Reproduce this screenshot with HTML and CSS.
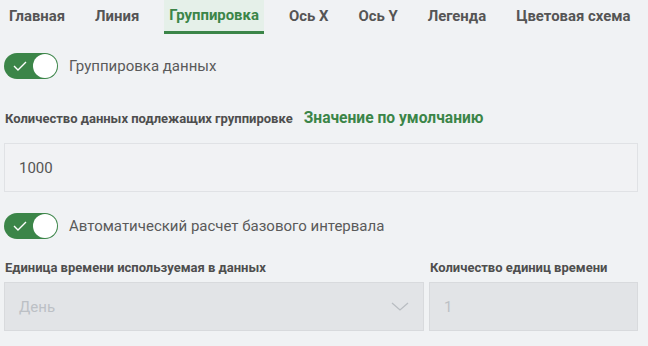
FILE: index.html
```html
<!DOCTYPE html>
<html lang="ru">
<head>
<meta charset="utf-8">
<link rel="stylesheet" href="styles.css">
</head>
<body>
<div class="page">
  <nav class="tabs">
    <div class="tab">Главная</div>
    <div class="tab">Линия</div>
    <div class="tab active">Группировка</div>
    <div class="tab">Ось X</div>
    <div class="tab">Ось Y</div>
    <div class="tab">Легенда</div>
    <div class="tab">Цветовая схема</div>
  </nav>

  <div class="switch-row row1">
    <span class="switch"><svg class="check" width="14" height="10" viewBox="0 0 14 10"><path d="M1 5 L5 9 L13 1" fill="none" stroke="#fff" stroke-width="1.4"/></svg><span class="knob"></span></span>
    <span class="switch-label">Группировка данных</span>
  </div>

  <div class="label-row">
    <span class="label">Количество данных подлежащих группировке</span>
    <span class="link">Значение по умолчанию</span>
  </div>
  <div class="input main">1000</div>

  <div class="switch-row row2">
    <span class="switch"><svg class="check" width="14" height="10" viewBox="0 0 14 10"><path d="M1 5 L5 9 L13 1" fill="none" stroke="#fff" stroke-width="1.4"/></svg><span class="knob"></span></span>
    <span class="switch-label">Автоматический расчет базового интервала</span>
  </div>

  <div class="grid">
    <div class="field">
      <div class="label">Единица времени используемая в данных</div>
      <div class="input disabled select">День
        <svg class="chev" width="18" height="10" viewBox="0 0 18 10"><path d="M1 1 L9 8 L17 1" fill="none" stroke="#b9bdc2" stroke-width="1.3"/></svg>
      </div>
    </div>
    <div class="field">
      <div class="label">Количество единиц времени</div>
      <div class="input disabled">1</div>
    </div>
  </div>
</div>
</body>
</html>
```
FILE: styles.css
```css
html, body {
  margin: 0;
  padding: 0;
  background: #f0f2f4;
}
body {
  font-family: Roboto, "Noto Sans", sans-serif;
  color: #5a5a5a;
}
.page {
  padding: 0 10px 0 4px;
}
.tabs {
  display: flex;
  gap: 20px;
  height: 34px;
}
.tab {
  padding: 0 5px;
  font-weight: 700;
  font-size: 14.9px;
  line-height: 32px;
  color: #555;
  border-bottom: 2px solid transparent;
}
.tab.active {
  background: #e5f0e9;
  color: #3b8548;
  border-bottom: 3px solid #3b8548;
  line-height: 31px;
}
.switch-row {
  display: flex;
  align-items: center;
  gap: 11px;
}
.row1 { margin-top: 19px; }
.row2 { margin-top: 21px; }
.switch {
  position: relative;
  width: 54px;
  height: 26px;
  border-radius: 13px;
  background: #3b8548;
  display: block;
}
.check {
  position: absolute;
  left: 9px;
  top: 8px;
}
.knob {
  position: absolute;
  right: 1px;
  top: 1px;
  width: 24px;
  height: 24px;
  border-radius: 50%;
  background: #fff;
}
.switch-label {
  font-size: 15px;
  color: #5a5a5a;
}
.label-row {
  display: flex;
  align-items: baseline;
  gap: 11px;
  margin-top: 30px;
}
.label {
  font-size: 13px;
  font-weight: 700;
  color: #4e4e4e;
  padding-left: 1px;
}
.link {
  font-size: 15.6px;
  font-weight: 700;
  color: #3b8548;
}
.input {
  height: 47px;
  border: 1px solid #e0e2e5;
  background: #f1f2f4;
  box-sizing: content-box;
  display: flex;
  align-items: center;
  padding: 0 14px;
  font-size: 15px;
  color: #555;
}
.input.main {
  margin-top: 16px;
}
.input.disabled {
  background: #e2e4e7;
  border-color: #d8dadd;
  color: #bcc0c5;
  margin-top: 7px;
}
.select {
  justify-content: space-between;
}
.grid {
  display: grid;
  grid-template-columns: 420px 1fr;
  gap: 5px;
  margin-top: 21px;
}
```
